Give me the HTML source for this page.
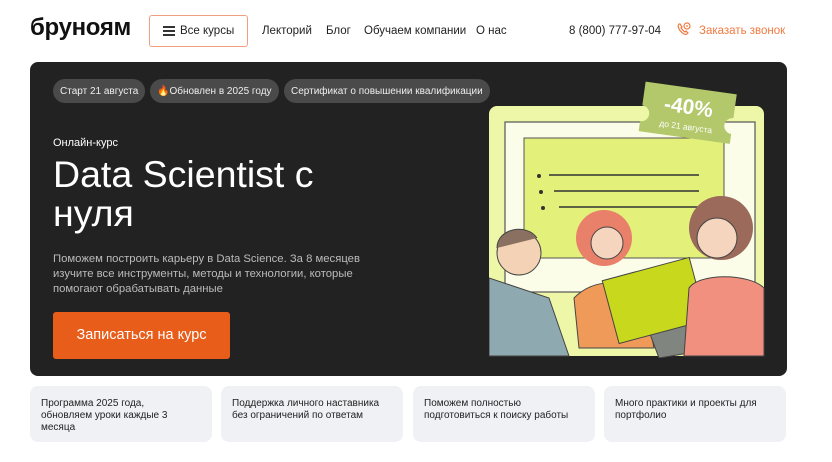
<!DOCTYPE html>
<html><head><meta charset="utf-8"><style>
*{margin:0;padding:0;box-sizing:border-box}
body{width:832px;height:462px;background:#fff;font-family:"Liberation Sans",sans-serif;position:relative;overflow:hidden;color:#222}
.a{position:absolute}
.nav{font-size:11.5px;color:#222;top:25px}
.chip{position:absolute;top:79px;height:24px;border-radius:12px;background:#4a4a4a;color:#eee;font-size:10px;line-height:25px;padding:0 7px;white-space:nowrap}
.card{position:absolute;top:386px;height:56px;width:182px;background:#eff1f5;border-radius:8px;font-size:10px;line-height:12px;padding:12px 11px;color:#222}
.card span{display:block;max-width:150px}
</style></head><body>
<div class="a" style="left:30px;top:14px;font-size:24px;font-weight:bold;letter-spacing:-0.3px;color:#111">бруноям</div>
<div class="a" style="left:149px;top:15px;width:99px;height:32px;border:1px solid #f0a080;border-radius:3px;font-size:11.5px;line-height:30px;padding-left:30px">Все курсы</div>
<div class="a" style="left:163px;top:26px;width:12px;height:1.5px;background:#333;box-shadow:0 4px 0 #333,0 8px 0 #333"></div>
<div class="a nav" style="left:262px">Лекторий</div>
<div class="a nav" style="left:326px">Блог</div>
<div class="a nav" style="left:364px">Обучаем компании</div>
<div class="a nav" style="left:476px">О нас</div>
<div class="a nav" style="left:569px">8 (800) 777-97-04</div>
<svg class="a" style="left:676px;top:21px" width="16" height="16" viewBox="0 0 16 16" fill="none" stroke="#f07a40" stroke-width="1.2"><path d="M3 3c-2 2 0 7 5 10 2 1 3 0 4-1l-2-2-1 1c-2-1-3-3-4-4l1-1-2-3z"/><circle cx="11" cy="5" r="3"/><path d="M10 5h2"/></svg>
<div class="a nav" style="left:699px;color:#f07a40">Заказать звонок</div>

<div class="a" style="left:30px;top:62px;width:757px;height:314px;background:#222;border-radius:8px"></div>
<div class="chip" style="left:53px">Старт 21 августа</div>
<div class="chip" style="left:150px">🔥Обновлен в 2025 году</div>
<div class="chip" style="left:284px">Сертификат о повышении квалификации</div>
<div class="a" style="left:53px;top:137px;font-size:11px;color:#fff">Онлайн-курс</div>
<div class="a" style="left:53px;top:155px;font-size:37.5px;line-height:39px;color:#fff;width:320px">Data Scientist с нуля</div>
<div class="a" style="left:53px;top:252px;font-size:11.3px;line-height:15px;color:#bbb;width:320px">Поможем построить карьеру в Data Science. За 8 месяцев изучите все инструменты, методы и технологии, которые помогают обрабатывать данные</div>
<div class="a" style="left:53px;top:312px;width:177px;height:47px;background:#e85d1a;border-radius:3px;color:#fff;font-size:14.5px;line-height:47px;text-align:center">Записаться на курс</div>

<svg class="a" style="left:489px;top:78px" width="300" height="280" viewBox="0 0 300 280">
<rect x="0" y="28" width="275" height="250" rx="8" fill="#eef7a8"/>
<rect x="16" y="44" width="250" height="170" fill="#fbfde8" stroke="#555" stroke-width="1.2"/>
<rect x="35" y="60" width="200" height="120" fill="#e3f07a" stroke="#555" stroke-width="1"/>
<path d="M60 97h150M65 113h145M70 129h140" stroke="#333" stroke-width="1.5"/>
<circle cx="50" cy="98" r="2" fill="#333"/><circle cx="52" cy="114" r="2" fill="#333"/><circle cx="54" cy="130" r="2" fill="#333"/>
<path d="M0 200 L60 220 L80 278 L0 278Z" fill="#8fa9b0" stroke="#444"/>
<circle cx="30" cy="175" r="22" fill="#f3d2b5" stroke="#444"/>
<path d="M8 170c0-20 30-25 40-10" fill="#8a7060" stroke="#444"/>
<path d="M85 220c20-20 50-20 70 0l10 50H90z" fill="#f09a5a" stroke="#444"/>
<circle cx="115" cy="160" r="28" fill="#e8806a"/>
<circle cx="118" cy="165" r="16" fill="#f6d5be" stroke="#444"/>
<path d="M140 200l60-10 30 80-60 10z" fill="#808580" stroke="#444"/>
<rect x="120" y="190" width="90" height="65" fill="#c8d81c" stroke="#444" transform="rotate(-15 165 222)"/>
<path d="M200 210c10-15 60-15 75 0v68h-80z" fill="#f29080" stroke="#444"/>
<circle cx="232" cy="150" r="32" fill="#9b6a5a"/>
<circle cx="228" cy="160" r="20" fill="#f6d5be" stroke="#444"/>
<g transform="rotate(8 200 40)"><path d="M152 10h92v24a8 8 0 0 0 0 16v10h-92v-10a8 8 0 0 0 0-16z" fill="#b2c86a"/>
<text x="198" y="36" font-family="Liberation Sans" font-weight="bold" font-size="21" fill="#fff" text-anchor="middle">-40%</text>
<text x="198" y="52" font-family="Liberation Sans" font-size="8.5" fill="#fff" text-anchor="middle">до 21 августа</text></g>
</svg>

<div class="card" style="left:30px"><span style="max-width:140px">Программа 2025 года, обновляем уроки каждые 3 месяца</span></div>
<div class="card" style="left:221px"><span>Поддержка личного наставника без ограничений по ответам</span></div>
<div class="card" style="left:413px"><span>Поможем полностью подготовиться к поиску работы</span></div>
<div class="card" style="left:604px"><span>Много практики и проекты для портфолио</span></div>
</body></html>
